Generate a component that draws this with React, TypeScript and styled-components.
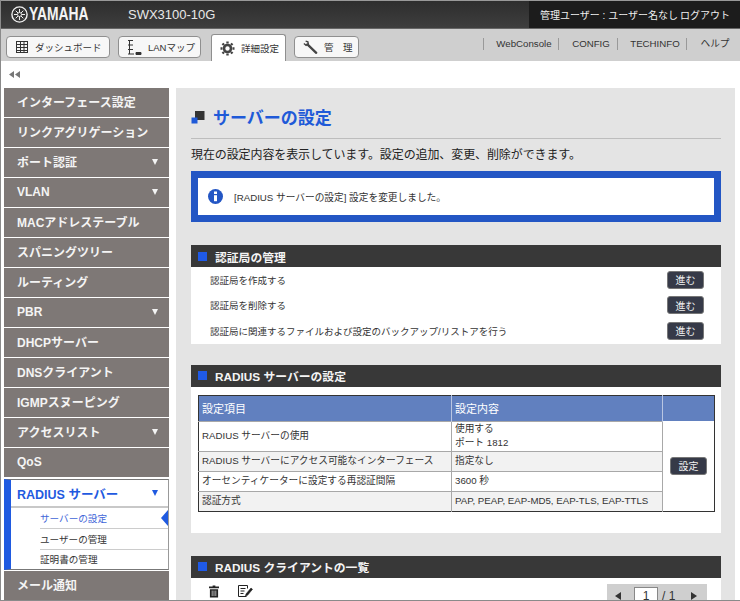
import React from "react";
import styled, { createGlobalStyle } from "styled-components";

const font = `"Liberation Sans", "Noto Sans CJK JP", sans-serif`;

const GlobalStyle = createGlobalStyle`
  html, body {
    margin: 0;
    padding: 0;
    background: #fff;
    overflow: hidden;
  }
  * {
    box-sizing: border-box;
  }
`;

const Page = styled.div`
  width: 740px;
  height: 601px;
  overflow: hidden;
  display: flex;
  flex-direction: column;
  border-left: 1px solid #8a8a8a;
  border-bottom: 1px solid #8a8a8a;
  font-family: ${font};
  color: #222;
`;

const TopBar = styled.header`
  height: 29px;
  flex: none;
  display: flex;
  align-items: stretch;
  background: linear-gradient(#2e2e2e, #3e3e3e);
  border-top: 1px solid #999;
  border-bottom: 1px solid #666;
`;

const Brand = styled.div`
  display: flex;
  align-items: center;
  padding-left: 10px;
  width: 127px;
  flex: none;
`;

const Logo = styled.span`
  color: #f4f4f4;
  font-size: 18px;
  font-weight: 700;
  margin-left: 1px;
  transform: scaleX(0.77);
  transform-origin: left center;
`;

const Model = styled.div`
  color: #e8e8e8;
  font-size: 13px;
  line-height: 27px;
  flex: 1;
`;

const UserBox = styled.div`
  width: 211px;
  flex: none;
  background: #1c1c1c;
  color: #f0f0f0;
  font-size: 10px;
  display: flex;
  align-items: center;
  justify-content: space-between;
  padding: 0 10px 0 11px;
`;

const TabBar = styled.nav`
  height: 32px;
  flex: none;
  display: flex;
  align-items: flex-end;
  background: #cfcfcf;
  padding-left: 5px;
`;

const Tab = styled.div<{ $active?: boolean; $width: number }>`
  width: ${({ $width }) => $width}px;
  height: ${({ $active }) => ($active ? "27px" : "22px")};
  margin-bottom: ${({ $active }) => ($active ? "0" : "3px")};
  margin-right: 8px;
  margin-left: ${({ $active }) => ($active ? "2px" : "0")};
  background: ${({ $active }) => ($active ? "#fff" : "#f7f7f7")};
  border: 1px solid #8f8f8f;
  border-bottom: ${({ $active }) => ($active ? "none" : "1px solid #8f8f8f")};
  border-radius: ${({ $active }) => ($active ? "3px 3px 0 0" : "4px")};
  display: flex;
  align-items: center;
  gap: 6px;
  padding-left: 8px;
  font-size: 9.5px;
  color: #333;
  white-space: nowrap;
  flex: none;
`;

const TabLinks = styled.div`
  margin-left: auto;
  align-self: center;
  display: flex;
  align-items: center;
  margin-top: -3px;
  padding-right: 3px;
`;

const TabLink = styled.span<{ $width: number }>`
  width: ${({ $width }) => $width}px;
  padding-left: 6px;
  font-size: 9.7px;
  line-height: 12px;
  color: #333;
  text-align: center;
  border-left: 1px solid #999;
`;

const Collapse = styled.div`
  height: 27px;
  flex: none;
  padding: 10px 0 0 8px;
  color: #666;
  display: flex;
`;

const Body = styled.div`
  flex: 1;
  min-height: 0;
  display: flex;
  align-items: flex-start;
  padding-left: 3px;
`;

const Side = styled.aside`
  width: 165px;
  flex: none;
  display: flex;
  flex-direction: column;
  gap: 1px;
  margin-right: 7px;
`;

const SideItem = styled.div`
  height: 29px;
  background: #7e7876;
  color: #f4f4f4;
  font-size: 12px;
  font-weight: 700;
  display: flex;
  align-items: center;
  justify-content: space-between;
  padding: 0 11px 2px 13px;
  white-space: nowrap;
`;

const Arrow = styled.span<{ $color: string }>`
  width: 0;
  height: 0;
  border-left: 3.5px solid transparent;
  border-right: 3.5px solid transparent;
  border-top: 6px solid ${({ $color }) => $color};
`;

const ActiveGroup = styled.div`
  border: 1px solid #777;
  border-left: 7px solid #1f5ae0;
  border-right: 1px solid #999;
  background: #fff;
  margin-top: 1px;
`;

const ActiveHead = styled.div`
  height: 28px;
  display: flex;
  align-items: center;
  justify-content: space-between;
  padding: 0 10px 0 6px;
  color: #1f5ae0;
  font-size: 12.5px;
  font-weight: 700;
  border-bottom: 2px solid #c8c8c8;
`;

const SubItem = styled.div<{ $active?: boolean }>`
  position: relative;
  height: 21px;
  margin-left: 29px;
  padding-bottom: 1px;
  display: flex;
  align-items: center;
  font-size: 9.6px;
  color: ${({ $active }) => ($active ? "#3f66d8" : "#333")};
  border-bottom: 1px solid #ccc;
  &:last-child {
    height: 19px;
    border-bottom: none;
  }
`;

const SubPointer = styled.span`
  position: absolute;
  right: 0;
  top: 2px;
  width: 0;
  height: 0;
  border-top: 8px solid transparent;
  border-bottom: 8px solid transparent;
  border-right: 7px solid #1f5ae0;
`;

const Main = styled.main`
  width: 559px;
  flex: none;
  background: #e4e4e4;
  padding: 15px 14px 0 15px;
  align-self: stretch;
  overflow: hidden;
`;

const TitleRow = styled.div`
  height: 36px;
  display: flex;
  align-items: center;
  gap: 8px;
  padding-bottom: 8px;
  border-bottom: 1px solid #bdbdbd;
`;

const Title = styled.h1`
  margin: 0;
  font-size: 17px;
  font-weight: 700;
  color: #1f5ad8;
`;

const Lead = styled.p`
  margin: 0;
  height: 32px;
  line-height: 32px;
  font-size: 12px;
  letter-spacing: -0.1px;
  color: #222;
`;

const Notice = styled.div`
  height: 51px;
  border: 7px solid #2356c4;
  background: #fff;
  display: flex;
  align-items: center;
  gap: 11px;
  padding-left: 10px;
  font-size: 9.7px;
  color: #333;
  margin-bottom: 23px;
`;

const SectionHead = styled.h2`
  margin: 0;
  height: 22px;
  background: #383838;
  color: #f4f4f4;
  font-size: 11.8px;
  font-weight: 700;
  display: flex;
  align-items: center;
  gap: 8px;
  padding-left: 7px;
`;

const BlueSquare = styled.span`
  width: 9px;
  height: 9px;
  background: #1f5ae8;
  flex: none;
`;

const Section = styled.section<{ $gap: number }>`
  background: #fff;
  margin-bottom: ${({ $gap }) => $gap}px;
`;

const ActionRow = styled.div`
  height: 25.5px;
  display: flex;
  align-items: center;
  justify-content: space-between;
  padding: 0 17px 0 19px;
  font-size: 9.5px;
  color: #333;
`;

const DarkButton = styled.button<{ $height: number }>`
  width: 37px;
  height: ${({ $height }) => $height}px;
  padding: 0;
  background: #363a48;
  color: #f2f2f2;
  border: 1px solid #777;
  border-radius: 3px;
  font-family: ${font};
  font-size: 10px;
`;

const TableWrap = styled.div`
  padding: 8px 7px 21px;
`;

const Table = styled.table`
  width: 516px;
  border-collapse: collapse;
  table-layout: fixed;
  border: 1px solid #333;
  font-size: 9.7px;
  color: #333;
`;

const Th = styled.th`
  height: 26px;
  background: #6180bf;
  color: #fff;
  font-size: 11px;
  font-weight: 400;
  text-align: left;
  padding: 0 0 0 3px;
  border-right: 1px solid #b9c6e2;
  &:last-child {
    border-right: none;
  }
`;

const Td = styled.td<{ $shade?: boolean; $height: number }>`
  height: ${({ $height }) => $height}px;
  padding: 0 0 0 3px;
  background: ${({ $shade }) => ($shade ? "#f2f2f2" : "#fff")};
  border-top: 1px solid #a8a8a8;
  border-right: 1px solid #a8a8a8;
  line-height: 14px;
`;

const ButtonCell = styled.td`
  background: #fff;
  text-align: center;
  padding: 0;
`;

const Tools = styled.div`
  height: 30px;
  position: relative;
  display: flex;
  align-items: center;
  gap: 18px;
  padding: 0 0 2px 18px;
`;

const Pager = styled.div`
  position: absolute;
  left: 416px;
  top: 6px;
  width: 100px;
  height: 24px;
  background: #cfcfcf;
  display: flex;
  align-items: center;
  padding-left: 8px;
  font-size: 12px;
  color: #333;
`;

const PageBox = styled.span`
  width: 24px;
  height: 18px;
  background: #fff;
  border: 1px solid #888;
  text-align: center;
  line-height: 16px;
  margin: 0 4px 0 13px;
`;

const PagerArrow = styled.span<{ $right?: boolean }>`
  width: 0;
  height: 0;
  border-top: 4px solid transparent;
  border-bottom: 4px solid transparent;
  ${({ $right }) =>
    $right ? "border-left: 6px solid #333; margin-left: 16px;" : "border-right: 6px solid #333;"}
`;

const Emblem = () => (
  <svg width="17" height="17" viewBox="0 0 17 17" fill="none" stroke="#f0f0f0">
    <circle cx="8.5" cy="8.5" r="7.6" strokeWidth="1.4" />
    <path d="M8.5 3v11M3 8.5h11M4.7 4.7l7.6 7.6M12.3 4.7l-7.6 7.6" strokeWidth="1" />
    <circle cx="8.5" cy="8.5" r="2" fill="#333" strokeWidth="0.8" />
  </svg>
);

const DashIcon = () => (
  <svg width="14" height="14" viewBox="0 0 14 14" fill="none" stroke="#333">
    <rect x="1.5" y="1.5" width="11" height="11" />
    <path d="M1.5 4.5h11M1.5 7.5h11M1.5 10.5h11M5.5 1.5v11M9 1.5v11" />
  </svg>
);

const MapIcon = () => (
  <svg width="15" height="17" viewBox="0 0 15 17" fill="none" stroke="#333">
    <path d="M1 1.5h5M1 6h5M1 10.5h5M1 15h6M2.5 1.5V15" />
    <path d="M9 13.5h5v2H9z" fill="#333" />
  </svg>
);

const GearIcon = () => (
  <svg width="15" height="15" viewBox="0 0 15 15">
    <path
      d="M7.5 2.5v-2M7.5 14.5v-2M2.5 7.5h-2M14.5 7.5h-2M4 4 2.5 2.5M12.5 12.5 11 11M11 4l1.5-1.5M2.5 12.5 4 11"
      stroke="#444"
      strokeWidth="2.4"
    />
    <circle cx="7.5" cy="7.5" r="3.5" fill="none" stroke="#444" strokeWidth="2.6" />
  </svg>
);

const WrenchIcon = () => (
  <svg width="15" height="15" viewBox="0 0 17 16" fill="none">
    <path d="M5 4.5 15 14" stroke="#444" strokeWidth="2.6" strokeLinecap="round" />
    <path d="M1 3.5 3.5 5.5 6 4 5.5 1.5 3 .8" stroke="#444" strokeWidth="1.6" />
  </svg>
);

const CollapseIcon = () => (
  <svg width="11" height="7" viewBox="0 0 11 7" fill="#777">
    <path d="M5 0v7L0 3.5zM11 0v7L6 3.5z" />
  </svg>
);

const TitleIcon = () => (
  <svg width="14" height="14" viewBox="0 0 14 14">
    <rect x="4" y="1" width="9.5" height="9" fill="#333" />
    <rect x="0.5" y="7.5" width="6" height="6" fill="#1f5ad8" />
  </svg>
);

const InfoIcon = () => (
  <svg width="15" height="15" viewBox="0 0 15 15">
    <circle cx="7.5" cy="7.5" r="7.5" fill="#2356c4" />
    <rect x="6" y="2.5" width="3" height="2.5" fill="#fff" />
    <rect x="6" y="6.2" width="3" height="6" fill="#fff" />
  </svg>
);

const TrashIcon = () => (
  <svg width="10" height="13" viewBox="0 0 11 13" fill="#222">
    <path d="M4 0h3v1h4v2H0V1h4zM1 4h9v9H1z" />
    <path d="M3.5 5.5v6M5.5 5.5v6M7.5 5.5v6" stroke="#fff" strokeWidth="0.7" />
  </svg>
);

const EditIcon = () => (
  <svg width="16" height="13" viewBox="0 0 16 13" fill="none" stroke="#222">
    <path d="M9.5 11.5h-8v-11h9v3M3.5 3.5h5M3.5 6h4M3.5 8.5h3" />
    <path d="M9 9l5-6 1.5 1.3-5 6-2 .7z" fill="#222" strokeWidth="0.6" />
  </svg>
);

const sideItems: Array<[string, boolean]> = [
  ["インターフェース設定", false],
  ["リンクアグリゲーション", false],
  ["ポート認証", true],
  ["VLAN", true],
  ["MACアドレステーブル", false],
  ["スパニングツリー", false],
  ["ルーティング", false],
  ["PBR", true],
  ["DHCPサーバー", false],
  ["DNSクライアント", false],
  ["IGMPスヌーピング", false],
  ["アクセスリスト", true],
  ["QoS", false],
];

const actions = [
  "認証局を作成する",
  "認証局を削除する",
  "認証局に関連するファイルおよび設定のバックアップ/リストアを行う",
];

export default function App() {
  return (
    <Page>
      <GlobalStyle />
      <TopBar>
        <Brand>
          <Emblem />
          <Logo>YAMAHA</Logo>
        </Brand>
        <Model>SWX3100-10G</Model>
        <UserBox>
          <span>管理ユーザー : ユーザー名なし</span>
          <span>ログアウト</span>
        </UserBox>
      </TopBar>
      <TabBar>
        <Tab $width={104}>
          <DashIcon />
          ダッシュボード
        </Tab>
        <Tab $width={83}>
          <MapIcon />
          LANマップ
        </Tab>
        <Tab $active $width={75}>
          <GearIcon />
          詳細設定
        </Tab>
        <Tab $width={65}>
          <WrenchIcon />
          管　理
        </Tab>
        <TabLinks>
          <TabLink $width={75}>WebConsole</TabLink>
          <TabLink $width={59}>CONFIG</TabLink>
          <TabLink $width={69}>TECHINFO</TabLink>
          <TabLink $width={51}>ヘルプ</TabLink>
        </TabLinks>
      </TabBar>
      <Collapse>
        <CollapseIcon />
      </Collapse>
      <Body>
        <Side>
          {sideItems.map(([label, hasArrow]) => (
            <SideItem key={label}>
              {label}
              {hasArrow && <Arrow $color="#f4f4f4" />}
            </SideItem>
          ))}
          <ActiveGroup>
            <ActiveHead>
              RADIUS サーバー
              <Arrow $color="#1f5ae0" />
            </ActiveHead>
            <SubItem $active>
              サーバーの設定
              <SubPointer />
            </SubItem>
            <SubItem>ユーザーの管理</SubItem>
            <SubItem>証明書の管理</SubItem>
          </ActiveGroup>
          <SideItem>メール通知</SideItem>
        </Side>
        <Main>
          <TitleRow>
            <TitleIcon />
            <Title>サーバーの設定</Title>
          </TitleRow>
          <Lead>現在の設定内容を表示しています。設定の追加、変更、削除ができます。</Lead>
          <Notice>
            <InfoIcon />
            [RADIUS サーバーの設定] 設定を変更しました。
          </Notice>
          <Section $gap={21}>
            <SectionHead>
              <BlueSquare />
              認証局の管理
            </SectionHead>
            {actions.map((label) => (
              <ActionRow key={label}>
                {label}
                <DarkButton $height={18}>進む</DarkButton>
              </ActionRow>
            ))}
          </Section>
          <Section $gap={23}>
            <SectionHead>
              <BlueSquare />
              RADIUS サーバーの設定
            </SectionHead>
            <TableWrap>
              <Table>
                <colgroup>
                  <col style={{ width: 253 }} />
                  <col style={{ width: 211 }} />
                  <col style={{ width: 52 }} />
                </colgroup>
                <thead>
                  <tr>
                    <Th>設定項目</Th>
                    <Th>設定内容</Th>
                    <Th />
                  </tr>
                </thead>
                <tbody>
                  <tr>
                    <Td $height={30}>RADIUS サーバーの使用</Td>
                    <Td $height={30}>
                      使用する
                      <br />
                      ポート 1812
                    </Td>
                    <ButtonCell rowSpan={4}>
                      <DarkButton $height={18}>設定</DarkButton>
                    </ButtonCell>
                  </tr>
                  <tr>
                    <Td $shade $height={20}>
                      RADIUS サーバーにアクセス可能なインターフェース
                    </Td>
                    <Td $shade $height={20}>
                      指定なし
                    </Td>
                  </tr>
                  <tr>
                    <Td $height={20}>オーセンティケーターに設定する再認証間隔</Td>
                    <Td $height={20}>3600 秒</Td>
                  </tr>
                  <tr>
                    <Td $shade $height={20}>
                      認証方式
                    </Td>
                    <Td $shade $height={20}>
                      PAP, PEAP, EAP-MD5, EAP-TLS, EAP-TTLS
                    </Td>
                  </tr>
                </tbody>
              </Table>
            </TableWrap>
          </Section>
          <Section $gap={0}>
            <SectionHead>
              <BlueSquare />
              RADIUS クライアントの一覧
            </SectionHead>
            <Tools>
              <TrashIcon />
              <EditIcon />
              <Pager>
                <PagerArrow />
                <PageBox>1</PageBox>/&nbsp;1
                <PagerArrow $right />
              </Pager>
            </Tools>
          </Section>
        </Main>
      </Body>
    </Page>
  );
}
